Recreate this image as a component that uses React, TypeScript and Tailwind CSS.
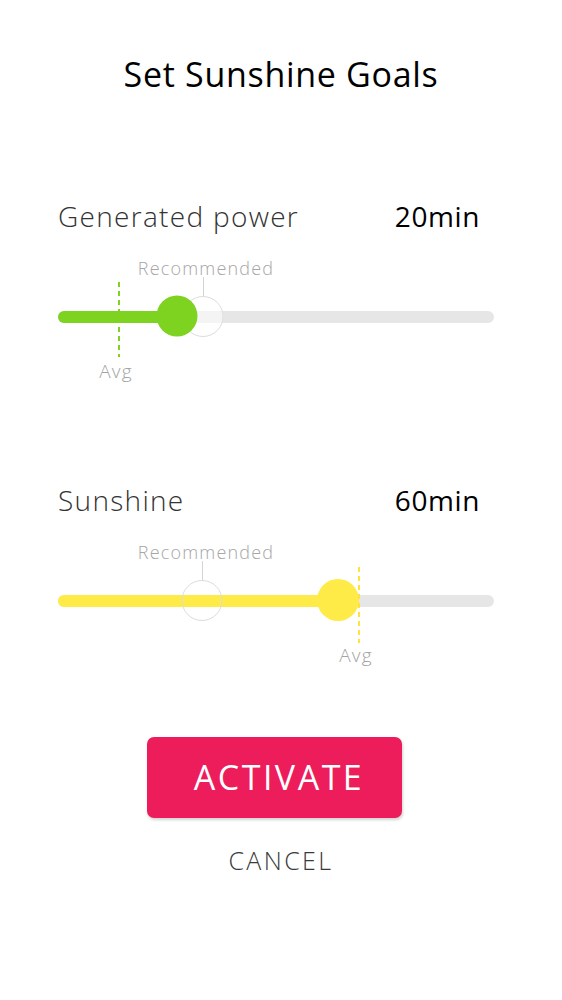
import React from "react";

type SliderProps = {
  label: string;
  value: string;
  color: string;
  fill: number;
  thumb: number;
  thumbD: number;
  rec: number;
  recLabel: number;
  avg: number;
  avgTop: number;
  avgH: number;
  avgLabel: number;
  dashColor: string;
};

function Slider(p: SliderProps) {
  return (
    <div className="flex flex-col">
      <div className="flex items-center justify-between h-[36px]">
        <span className="text-[28px] leading-[36px] text-[#333333] font-light tracking-[1.3px]">{p.label}</span>
        <span className="text-[28px] leading-[36px] text-black font-medium pr-[14px] tracking-[0.6px]">{p.value}</span>
      </div>
      <div className="relative h-[160px]">
        <div className="absolute left-0 right-0 top-[77px] h-[12px] rounded-full bg-[#e6e6e6]" />
        <div
          className="absolute top-[62px] h-[41px] w-[41px] -translate-x-1/2 rounded-full bg-white/55"
          style={{ left: p.rec }}
        />
        <div
          className="absolute left-0 top-[77px] h-[12px] rounded-full"
          style={{ width: p.fill, background: p.color }}
        />
        <span
          className="absolute top-[23px] -translate-x-1/2 text-[18px] leading-[22px] text-[#a6a6a6] font-light tracking-[1.2px] whitespace-nowrap"
          style={{ left: p.recLabel }}
        >
          Recommended
        </span>
        <div className="absolute top-[43px] h-[20px] w-px bg-[#d4d4d4]" style={{ left: p.rec }} />
        <div
          className="absolute top-[62px] h-[41px] w-[41px] -translate-x-1/2 rounded-full border border-[#dcdcdc]"
          style={{ left: p.rec }}
        />
        <div
          className="absolute -translate-x-1/2 -translate-y-1/2 rounded-full"
          style={{ left: p.thumb, top: 82, width: p.thumbD, height: p.thumbD, background: p.color }}
        />
        <svg
          className="absolute"
          width="2"
          height={p.avgH}
          style={{ left: p.avg - 1, top: p.avgTop }}
        >
          <line x1="1" y1="0" x2="1" y2={p.avgH} stroke={p.dashColor} strokeWidth="2" strokeDasharray="5 4" />
        </svg>
        <span
          className="absolute top-[126px] -translate-x-1/2 text-[19px] leading-[22px] text-[#a3a3a3] font-light tracking-[1.2px]"
          style={{ left: p.avgLabel }}
        >
          Avg
        </span>
      </div>
    </div>
  );
}

export default function App() {
  return (
    <div
      className="w-full h-[1000px] bg-white flex flex-col"
      style={{ fontFamily: "'Open Sans', sans-serif" }}
    >
      <h1 className="mt-[54px] text-center text-[34px] leading-[40px] text-black font-normal tracking-[0.7px]">
        Set Sunshine Goals
      </h1>
      <div className="mt-[104px] ml-[58px] w-[436px] flex flex-col gap-[88px]">
        <Slider
          label="Generated power"
          value="20min"
          color="#7ed321"
          fill={119}
          thumb={119}
          thumbD={41}
          rec={145}
          recLabel={148}
          avg={61}
          avgTop={48}
          avgH={75}
          avgLabel={58}
          dashColor="#7ed321"
        />
        <Slider
          label="Sunshine"
          value="60min"
          color="#ffeb47"
          fill={280}
          thumb={280}
          thumbD={42}
          rec={144}
          recLabel={148}
          avg={301}
          avgTop={49}
          avgH={76}
          avgLabel={298}
          dashColor="#ffe23a"
        />
      </div>
      <div className="mt-[59px] flex flex-col items-center">
        <button className="ml-[-13px] w-[255px] h-[81px] rounded-[7px] bg-[#ed1c5b] text-white text-[34px] tracking-[2.5px] shadow-[1px_2px_3px_rgba(0,0,0,0.18)] flex items-center justify-center pl-[9px]">
          ACTIVATE
        </button>
        <span className="mt-[26px] text-[25px] leading-[32px] text-[#3a3a3a] font-light tracking-[2.4px]">CANCEL</span>
      </div>
    </div>
  );
}
